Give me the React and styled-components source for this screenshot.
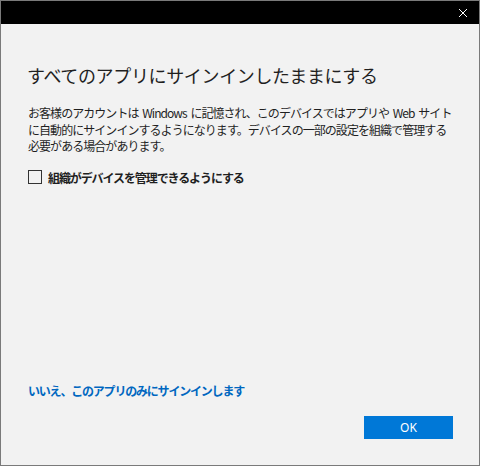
import React from 'react'
import styled, { createGlobalStyle } from 'styled-components'

const GlobalStyle = createGlobalStyle`
  html, body {
    margin: 0;
    padding: 0;
    background: #ffffff;
  }
  body {
    font-family: "Noto Sans CJK JP", "Noto Sans", sans-serif;
  }
`

const Window = styled.div`
  display: flex;
  flex-direction: column;
  width: 480px;
  height: 466px;
  box-sizing: border-box;
  border: 1px solid #7a7a7a;
  background: #f2f2f2;
`

const TitleBar = styled.div`
  display: flex;
  justify-content: flex-end;
  align-items: center;
  height: 23px;
  background: #000000;
  padding-right: 11px;
`

const CloseButton = styled.div`
  display: flex;
  width: 10px;
  height: 10px;
  color: #ffffff;
`

const Body = styled.div`
  display: flex;
  flex: 1;
  flex-direction: column;
  padding: 39px 26px 26px 27px;
`

const Heading = styled.h1`
  margin: 0 0 0 -1px;
  font-size: 18px;
  font-weight: 400;
  letter-spacing: -0.35px;
  line-height: 24px;
  color: #1f1f1f;
  white-space: nowrap;
`

const Description = styled.p`
  margin: 18px 0 0;
  font-size: 12px;
  letter-spacing: -0.95px;
  word-spacing: 2px;
  line-height: 16.5px;
  color: #1f1f1f;
  white-space: nowrap;
`

const CheckRow = styled.label`
  display: flex;
  align-items: center;
  gap: 6px;
  margin-top: 14px;
  font-size: 12px;
  font-weight: 700;
  letter-spacing: -1.1px;
  color: #1f1f1f;
  white-space: nowrap;
`

const Box = styled.span`
  width: 12px;
  height: 12px;
  border: 1px solid #333333;
  background: transparent;
`

const Footer = styled.div`
  display: flex;
  flex-direction: column;
  margin-top: auto;
`

const Link = styled.a`
  font-size: 12px;
  font-weight: 700;
  letter-spacing: -1.2px;
  color: #0067c0;
  text-decoration: none;
  white-space: nowrap;
`

const ButtonRow = styled.div`
  display: flex;
  justify-content: flex-end;
  margin-top: 17px;
`

const PrimaryButton = styled.button`
  width: 89px;
  height: 23px;
  border: none;
  background: #0078d7;
  color: #ffffff;
  font-family: "Noto Sans", sans-serif;
  font-size: 12px;
`

export default function App() {
  return (
    <>
      <GlobalStyle />
      <Window>
        <TitleBar>
          <CloseButton>
            <svg width="10" height="10" viewBox="0 0 10 10">
              <path d="M1 1L9 9M9 1L1 9" stroke="currentColor" strokeWidth="1" />
            </svg>
          </CloseButton>
        </TitleBar>
        <Body>
          <Heading>すべてのアプリにサインインしたままにする</Heading>
          <Description>
            お客様のアカウントは Windows に記憶され、このデバイスではアプリや Web サイト
            <br />
            に自動的にサインインするようになります。デバイスの一部の設定を組織で管理する
            <br />
            必要がある場合があります。
          </Description>
          <CheckRow>
            <Box />
            組織がデバイスを管理できるようにする
          </CheckRow>
          <Footer>
            <Link>いいえ、このアプリのみにサインインします</Link>
            <ButtonRow>
              <PrimaryButton>OK</PrimaryButton>
            </ButtonRow>
          </Footer>
        </Body>
      </Window>
    </>
  )
}
